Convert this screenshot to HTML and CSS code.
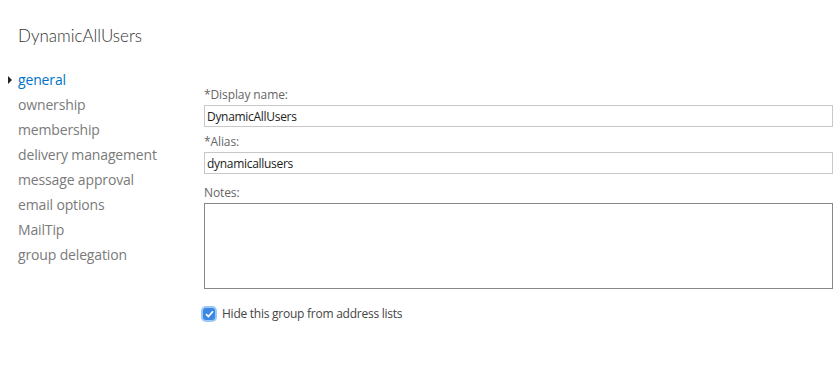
FILE: index.html
```html
<!DOCTYPE html>
<html lang="en">
<head>
    <meta charset="UTF-8">
    <title>DynamicAllUsers</title>
    <link rel="stylesheet" href="styles.css">
</head>
<body>
    <h1 class="title">DynamicAllUsers</h1>

    <div class="layout">
        <!-- Left navigation -->
        <ul class="nav">
            <li class="nav-item active">general</li>
            <li class="nav-item">ownership</li>
            <li class="nav-item">membership</li>
            <li class="nav-item">delivery management</li>
            <li class="nav-item">message approval</li>
            <li class="nav-item">email options</li>
            <li class="nav-item">MailTip</li>
            <li class="nav-item">group delegation</li>
        </ul>

        <!-- General form -->
        <form class="form">
            <label class="field-label" for="display-name">*Display name:</label>
            <input class="text-input" id="display-name" type="text" value="DynamicAllUsers">

            <label class="field-label alias" for="alias">*Alias:</label>
            <input class="text-input" id="alias" type="text" value="dynamicallusers">

            <label class="field-label notes" for="notes">Notes:</label>
            <textarea class="notes-input" id="notes"></textarea>

            <label class="check-row">
                <span class="checkbox">
                    <svg width="9" height="8" viewBox="0 0 9 8"><path d="M1 4.2 L3.4 6.5 L8 1.3" fill="none" stroke="#fff" stroke-width="1.7"/></svg>
                </span>
                Hide this group from address lists
            </label>
        </form>
    </div>
</body>
</html>
```

FILE: styles.css
```css
body {
    margin: 0;
    font-family: "Open Sans", "Noto Sans", sans-serif;
    background: #fff;
    color: #333;
    overflow: hidden;
}
.title {
    margin: 0;
    padding: 24px 0 0 18px;
    font-family: Lato, "Open Sans", sans-serif;
    font-size: 17px;
    font-weight: 300;
    line-height: 24px;
    color: #333;
}
.layout {
    display: flex;
    padding-top: 19px;
}
.nav {
    list-style: none;
    margin: 0;
    padding: 0 0 0 18px;
    width: 186px;
    flex-shrink: 0;
}
.nav-item {
    font-size: 14px;
    line-height: 25px;
    color: #7a7a7a;
    position: relative;
    letter-spacing: -0.15px;
}
.nav-item.active {
    color: #0072c6;
}
.nav-item.active::before {
    content: "";
    position: absolute;
    left: -10px;
    top: 9px;
    border-left: 4px solid #222;
    border-top: 4px solid transparent;
    border-bottom: 4px solid transparent;
}
.form {
    display: flex;
    flex-direction: column;
    width: 660px;
    padding-top: 20px;
}
.field-label {
    font-size: 12px;
    line-height: 16px;
    color: #666;
    margin-bottom: 2px;
    letter-spacing: -0.1px;
}
.field-label.alias {
    margin-top: 7px;
}
.field-label.notes {
    margin-top: 11px;
}
.text-input {
    height: 22px;
    box-sizing: border-box;
    border: 1px solid #c8c8c8;
    padding: 0 2px;
    font-family: inherit;
    font-size: 12px;
    letter-spacing: -0.3px;
    color: #222;
    outline: none;
}
.notes-input {
    height: 86px;
    box-sizing: border-box;
    border: 1px solid #888;
    resize: none;
    font-family: inherit;
    outline: none;
}
.check-row {
    display: flex;
    align-items: center;
    gap: 7px;
    margin-top: 16px;
    margin-left: -1px;
    font-size: 12px;
    letter-spacing: -0.25px;
    color: #444;
}
.checkbox {
    width: 12px;
    height: 12px;
    border-radius: 3px;
    background: #3b87e4;
    box-shadow: 0 0 0 2px #9cc8f7;
    display: flex;
    align-items: center;
    justify-content: center;
}
```
